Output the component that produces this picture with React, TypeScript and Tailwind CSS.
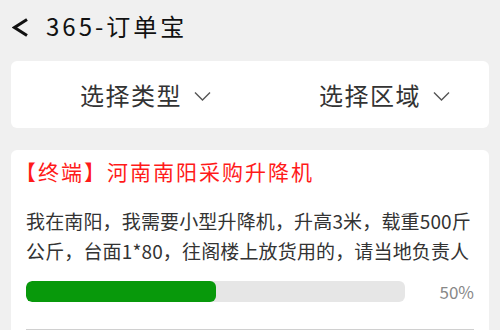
const font = { fontFamily: '"Noto Sans CJK SC", "Noto Sans", sans-serif' };

const FilterItem = ({ label }: { label: string }) => (
    <div className="flex items-center justify-center pl-[30px] gap-[12px]">
        <span className="text-[24px] tracking-[1.5px] text-[#333]">{label}</span>
        <svg width="17" height="10" viewBox="0 0 17 10" className="mt-[2px]">
            <path d="M1 1.5 L8.5 9 L16 1.5" fill="none" stroke="#555" strokeWidth="1.4" />
        </svg>
    </div>
);

export default function App() {
    const progress = 50;
    return (
        <div className="w-[500px] h-[330px] overflow-hidden bg-[#f0f0f0]" style={font}>
            <div className="h-[52px] flex items-center pl-[12px]">
                <svg width="17" height="19" viewBox="0 0 17 19" className="mt-[3px]">
                    <path d="M15 1.5 L2.5 9.5 L15 17.5" fill="none" stroke="#111" strokeWidth="3" />
                </svg>
                <span className="ml-[17px] text-[24px] tracking-[3px] text-[#111]">365-订单宝</span>
            </div>

            <div className="mx-[11px] mt-[9px] h-[67px] bg-white rounded-md grid grid-cols-2">
                <FilterItem label="选择类型" />
                <FilterItem label="选择区域" />
            </div>

            <div className="mx-[11px] mt-[22px] bg-white rounded-md px-[15px] pt-[6px] pb-[20px]">
                <div className="text-[21px] leading-[30px] tracking-[2px] text-[#ff1a1a] -ml-[11px]">
                    【终端】河南南阳采购升降机
                </div>
                <p className="mt-[20px] text-[19px] leading-[29.5px] tracking-[0.15px] text-[#333]">
                    我在南阳，我需要小型升降机，升高3米，载重500斤公斤，台面1*80，往阁楼上放货用的，请当地负责人
                </p>
                <div className="mt-[14px] flex items-center">
                    <div className="w-[379px] h-[21px] rounded-[6px] bg-[#e6e6e6] overflow-hidden">
                        <div className="h-full bg-[#08990b] rounded-[6px]" style={{ width: `${progress}%` }} />
                    </div>
                    <span className="ml-auto text-[17px] text-[#888]">{progress}%</span>
                </div>
                <div className="mt-[24px] border-t border-[#d0d0d0]" />
            </div>
        </div>
    );
}
